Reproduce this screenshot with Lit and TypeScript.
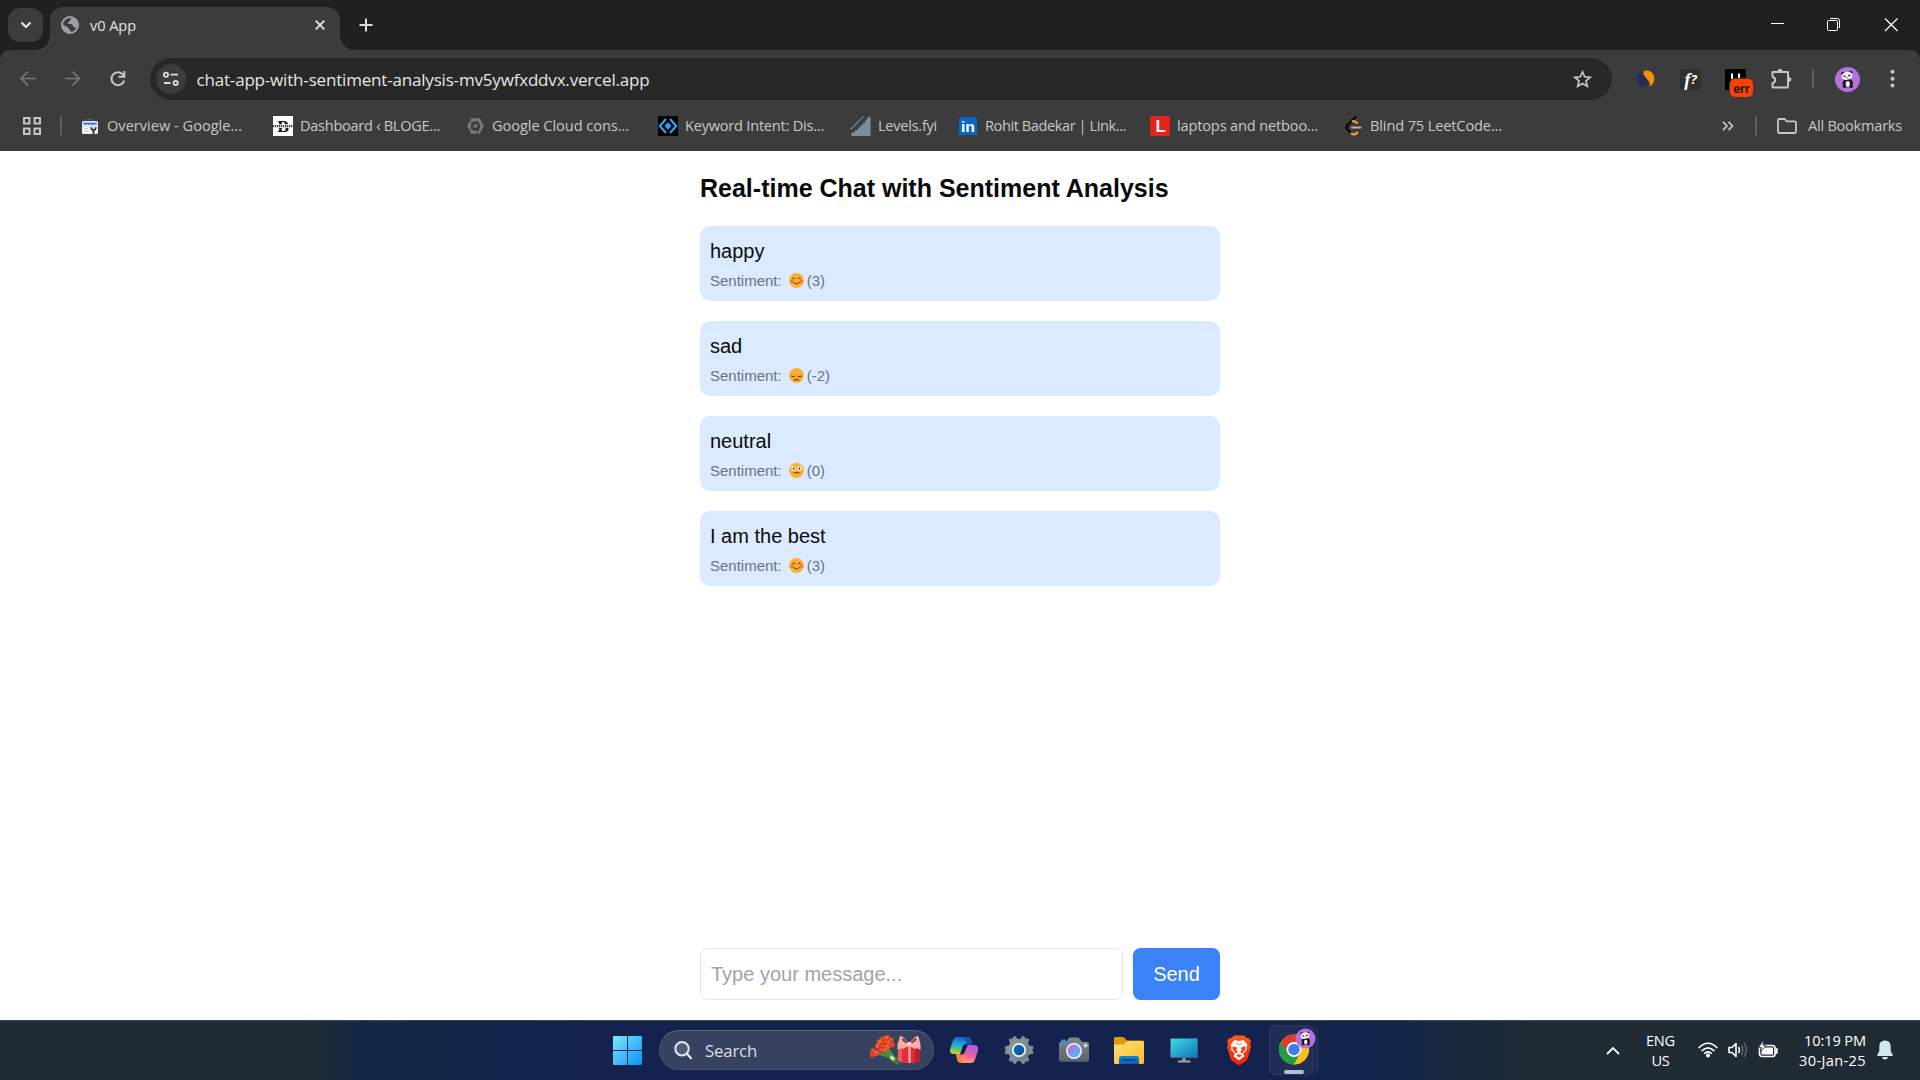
import { LitElement, html, css, svg, type TemplateResult } from "lit";
import { customElement, property } from "lit/decorators.js";

/** A single-line label whose tracking is adjusted so it occupies `w` pixels. */
@customElement("fit-label")
export class FitLabel extends LitElement {
  @property({ type: Number }) w = 0;
  @property() text = "";
  static styles = css`
    :host { display: block; white-space: pre; flex: none; }
    .t { display: inline-block; white-space: pre; }
  `;
  render() {
    return html`<span class="t">${this.text}</span>`;
  }
  updated() {
    const el = this.renderRoot.querySelector<HTMLElement>(".t");
    if (!el || !this.w) return;
    this.style.width = `${this.w}px`;
    el.style.letterSpacing = "0px";
    const natural = el.getBoundingClientRect().width;
    el.style.letterSpacing = `${(this.w - natural) / this.text.length}px`;
  }
}

const icon = (w: number, h: number, body: TemplateResult, cls = "", vb = `0 0 ${w} ${h}`) =>
  html`<svg class="ic ${cls}" width=${w} height=${h} viewBox=${vb} fill="none">${body}</svg>`;

/* ---------- emoji ---------- */
type Mood = "happy" | "sad" | "neutral";

const faces: Record<Mood, TemplateResult> = {
  happy: svg`<circle cx="2.7" cy="8.3" r="1.5" fill="#ff6b3d"/><circle cx="12.3" cy="8.3" r="1.5" fill="#ff6b3d"/>
    <path d="M3.4 5.600Q4.700 3.800 6 5.600M9 5.600Q10.300 3.800 11.600 5.600M4.400 9.500Q7.500 12.600 10.600 9.500" stroke="#5b3626" stroke-width="1" stroke-linecap="round"/>`,
  sad: svg`<path d="M2.600 8Q4.200 9.200 5.800 8.200M9.200 8.200Q10.800 9.200 12.400 8M5.200 12.300Q7.500 10.400 9.800 12.300" stroke="#6b3f1d" stroke-width="1.100" stroke-linecap="round"/>`,
  neutral: svg`<circle cx="4.500" cy="5.400" r="2.200" fill="#fff"/><circle cx="10.500" cy="5.400" r="2.200" fill="#fff"/>
    <circle cx="4.700" cy="5.400" r="1" fill="#4a3426"/><circle cx="10.300" cy="5.400" r="1" fill="#4a3426"/>
    <path d="M4.800 9.800H10.200" stroke="#5b3626" stroke-width="1.100" stroke-linecap="round"/>`,
};
const face = (m: Mood) => icon(15, 15, svg`<circle cx="7.5" cy="7.5" r="7.4" fill="#fdb02f"/>${faces[m]}`);

/* ---------- panda avatar ---------- */
const panda = svg`
  <circle cx="12.5" cy="12.5" r="12.5" fill="#b470e0"/>
  <circle cx="7.800" cy="6.400" r="1.700" fill="#222"/><circle cx="15.700" cy="5.400" r="1.700" fill="#222"/>
  <ellipse cx="12.800" cy="16" rx="5.200" ry="4.400" fill="#161616"/>
  <ellipse cx="12" cy="8.900" rx="5.600" ry="4" fill="#f1f1f1" transform="rotate(-8 12 9)"/>
  <ellipse cx="12.800" cy="17" rx="2.200" ry="2.900" fill="#eee"/>
  <ellipse cx="9.600" cy="9.300" rx="1.300" ry=".8" fill="#222"/><ellipse cx="14.300" cy="8.600" rx="1.300" ry=".8" fill="#222"/>
  <circle cx="12.100" cy="10.800" r=".6" fill="#222"/>
  <ellipse cx="9.300" cy="19.600" rx="1.700" ry="1.300" fill="#111"/><ellipse cx="16.300" cy="19.600" rx="1.700" ry="1.300" fill="#111"/>`;

/* ---------- bookmarks ---------- */
interface Bookmark { label: string; w: number; gap: number; after: number; icon: TemplateResult; }

const bookmarks: Bookmark[] = [
  { label: "Overview - Google...", w: 135, gap: 9, after: 31,
    icon: icon(16, 16, svg`<path d="M4.500 3V2Q4.500 1.200 5.500 1.200H10.500Q11.500 1.200 11.500 2V3" stroke="#5a5a5a" stroke-width="1.200"/>
      <path d="M1.500 3H14.500Q16 3 16 4.500V14.500Q16 16 14.500 16H1.500Q0 16 0 14.500V4.500Q0 3 1.500 3Z" fill="#eef1f6"/>
      <rect x="1" y="4.600" width="14" height="2.200" rx="1" fill="#3f82f5"/>
      <path d="M0 8.200H16" stroke="#cfd6e2" stroke-width=".8"/><path d="M2.500 10.500H6M2.500 13H6" stroke="#c9c9c9"/>
      <path d="M9.300 9.300Q9.300 12 11.500 12.300Q13.700 12 13.700 9.300M11.500 12V16" stroke="#333" stroke-width="1.900"/>`) },
  { label: "Dashboard ‹ BLOGE...", w: 140, gap: 7, after: 27,
    icon: icon(20, 20, svg`<rect width="20" height="20" fill="#fff"/>
      <text x="10" y="16" text-anchor="middle" font-family="Liberation Serif, serif" font-weight="700" font-size="17.500" fill="#111">B</text>
      <rect y="8.300" width="20" height="3.600" fill="#fff"/>
      <path d="M0 10.200H20" stroke="#444" stroke-width="2.300" stroke-dasharray="1.300 .7"/>`) },
  { label: "Google Cloud cons...", w: 137, gap: 8, after: 29,
    icon: icon(17, 16, svg`<path d="M5.200 1.800H11.800L15.200 8L11.800 14.200H5.200L1.800 8Z" stroke="#7a7a7a" stroke-width="2.900"/>
      <circle cx="8.500" cy="8" r="2.300" fill="#6c6c6c"/><path d="M2.500 2L6 7M2 13L5.500 9.500M12.500 9L9.800 16" stroke="#3c3c3c" stroke-width=".9"/>`) },
  { label: "Keyword Intent: Dis...", w: 139, gap: 7, after: 26,
    icon: icon(20, 20, svg`<rect width="20" height="20" fill="#000"/>
      <path d="M8 3L1.800 10L8 17M12 3L18.200 10L12 17" stroke="#2aa5f7" stroke-width="2.200"/>
      <path d="M10 6.300L13.500 10L10 13.700L6.500 10Z" fill="#2aa5f7"/>`) },
  { label: "Levels.fyi", w: 59, gap: 7, after: 22,
    icon: icon(21, 20, svg`<path d="M20.500 1V20H1.500V16.500H5V14H8V11.500H10.500V9H13V6.500H15.500V3.500H17.500V1Z" fill="#7b8f9b"/>
      <path d="M.5 13.500L13.500 .5" stroke="#6e8494" stroke-width="1.300"/>`) },
  { label: "Rohit Badekar | Link...", w: 141, gap: 8, after: 24,
    icon: icon(18, 18, svg`<rect width="18" height="18" rx="1.500" fill="#0a66c2"/>
      <text x="9" y="14.800" text-anchor="middle" font-family="Liberation Sans, sans-serif" font-weight="700" font-size="15.500" textLength="14" lengthAdjust="spacingAndGlyphs" fill="#fff">in</text>`) },
  { label: "laptops and netboo...", w: 141, gap: 7, after: 27,
    icon: icon(20, 20, svg`<rect width="20" height="20" fill="#e2231a"/>
      <text x="10.700" y="15.800" text-anchor="middle" font-family="Liberation Sans, sans-serif" font-weight="700" font-size="17" fill="#fff">L</text>`) },
  { label: "Blind 75 LeetCode...", w: 132, gap: 8, after: 0,
    icon: icon(17, 20, svg`<path d="M10.500 1L2.300 9.300Q.8 11.300 2.300 13.300L5.500 16.500" stroke="#080808" stroke-width="2.400" stroke-linecap="round"/>
      <path d="M7 5.600Q9.500 4 12.500 7.500M6 17Q9.500 20.500 12.800 15.800" stroke="#ffa116" stroke-width="2.300"/>
      <path d="M7 11.500H15.500" stroke="#b3b3b3" stroke-width="2.200" stroke-linecap="round"/>`) },
];

const messages: { text: string; mood: Mood; score: number }[] = [
  { text: "happy", mood: "happy", score: 3 },
  { text: "sad", mood: "sad", score: -2 },
  { text: "neutral", mood: "neutral", score: 0 },
  { text: "I am the best", mood: "happy", score: 3 },
];

/* ---------- browser chrome ---------- */
@customElement("browser-frame")
export class BrowserFrame extends LitElement {
  static styles = css`
    :host { display: block; height: 151px; background: #1f2120; color: #e3e3e3;
      font-family: "Open Sans", "Noto Sans", sans-serif; font-size: 14.600px; }
    .ic { display: block; flex: none; overflow: visible; }
    .strip { display: flex; height: 50px; }
    .search-tabs { width: 35px; height: 34px; margin: 8px 7px 0 8px; border-radius: 12px; background: #3c3c3c;
      display: flex; align-items: center; justify-content: center; }
    .tab { position: relative; width: 290px; height: 43px; margin: 7px 1px 0 0; border-radius: 13px 13px 0 0;
      background: #3c3c3c; display: flex; align-items: center; padding: 0 15px 8px 11px; box-sizing: border-box; }
    .tab::before, .tab::after { content: ""; position: absolute; bottom: 0; width: 14px; height: 14px; }
    .tab::before { left: -14px; background: radial-gradient(circle at 0 0, transparent 13.5px, #3c3c3c 14px); }
    .tab::after { right: -14px; background: radial-gradient(circle at 100% 0, transparent 13.5px, #3c3c3c 14px); }
    .tab fit-label { margin-left: 11px; }
    .tab-close { margin-left: auto; }
    .newtab { margin: 18px 0 0 18px; }
    .win { margin-left: auto; display: flex; padding: 17px 21px 0 0; gap: 43px; }
    .body { height: 101px; background: #3c3c3c; border-radius: 10px 10px 0 0; }
    .tools { display: flex; height: 58px; align-items: center; padding-left: 20px; box-sizing: border-box; }
    .nav { display: flex; align-items: center; gap: 29px; width: 130px; }
    .url { width: 1462px; height: 42px; border-radius: 21px; background: #282828; display: flex; align-items: center;
      box-sizing: border-box; padding: 0 20px 0 6px; color: #e6e6e6; font-size: 17px; }
    .site { width: 30px; height: 30px; border-radius: 50%; background: #3c3c3c; display: flex; align-items: center; justify-content: center; margin-right: 10.500px; }
    .star { margin-left: auto; }
    .ext { display: flex; align-items: center; padding-left: 24px; }
    .fbox { width: 21px; height: 21px; margin-left: 25px; border-radius: 3px; background: #303030; color: #fff;
      display: flex; align-items: center; justify-content: center; font: italic bold 19px/19px "Liberation Serif", serif; }
    .fbox b { font: italic bold 13px/20px "Open Sans", sans-serif; }
    .blk { position: relative; width: 21px; height: 21px; margin-left: 24px; background: #000; }
    .badge { position: absolute; left: 5px; top: 10px; width: 23px; height: 18px; border-radius: 5px; background: #ff4000;
      color: #1a1a1a; font: bold 11.500px/20px "Open Sans", sans-serif; letter-spacing: -.3px; text-align: center; box-shadow: 0 0 0 1px #3c3c3c; }
    .puzzle { margin-left: 24px; }
    .dots { margin-left: 30px; }
    .sep { width: 2px; height: 20px; background: #5d5d5d; border-radius: 1px; }
    .ext .sep { margin: 0 21px 0 20px; }
    .marks { display: flex; align-items: center; height: 35px; padding: 0 18px 0 23px; box-sizing: border-box; color: #c7c7c7; }
    .marks fit-label { margin-bottom: 2px; }
    .mark { display: flex; align-items: center; }
    .first { margin: 0 20px 0 18px; }
    .right { margin-left: auto; display: flex; align-items: center; }
    .right .sep { margin: 0 20px 0 21px; }
    .right fit-label { margin-left: 11px; }
  `;
  render() {
    return html`
      <div class="strip">
        <div class="search-tabs">${icon(12, 8, svg`<path d="M1.500 1.500L6 6L10.500 1.500" stroke="#e3e3e3" stroke-width="2.200"/>`)}</div>
        <div class="tab">
          ${icon(18, 18, svg`<circle cx="9" cy="9" r="9" fill="#9aa0a6"/>
            <path d="M9.800 1.900Q10.500 4.200 8.500 4.600Q8.200 6.400 6.600 6.600Q6.500 8 8 8.100Q9.500 7.700 11 8.200Q12 9 12 10.300Q13.500 10.500 13.300 11.800Q14.800 12.200 15.700 10.200Q14.500 15.300 9.600 16Q9.800 14.300 8.300 13.600Q7 13 7.200 11.300Q4.500 11.300 2.600 9Q2 8.300 2 7.700Q3.500 2.200 9.800 1.900Z" fill="#3c3c3c"/>
            <path d="M2 9L7 11.400V13L9.500 14.200V16.200L4.500 15Z" fill="#9aa0a6"/>`)}
          <fit-label .w=${46} text="v0 App"></fit-label>
          ${icon(10, 10, svg`<path d="M.7 .7L9.300 9.300M9.300 .7L.7 9.300" stroke="#e3e3e3" stroke-width="1.900"/>`, "tab-close")}
        </div>
        <div class="newtab">${icon(14, 14, svg`<path d="M7 .5V13.500M.5 7H13.500" stroke="#dcdcdc" stroke-width="2"/>`)}</div>
        <div class="win">
          ${icon(13, 14, svg`<path d="M0 6.500H13" stroke="#fff"/>`)}
          ${icon(14, 14, svg`<path d="M3 1.500H10.500Q12.500 1.500 12.500 3.500V11" stroke="#fff"/><rect x=".5" y="3.500" width="10" height="10" rx="1" stroke="#fff"/>`)}
          ${icon(15, 15, svg`<path d="M1 1.500L13.500 14M13.500 1.500L1 14" stroke="#fff" stroke-width="1.200"/>`)}
        </div>
      </div>
      <div class="body">
        <div class="tools">
          <div class="nav">
            ${icon(16, 16, svg`<path d="M15.500 7.500H1.500M8 .7L1.200 7.500L8 14.300" stroke="#777" stroke-width="1.700"/>`)}
            ${icon(16, 16, svg`<path d="M0 7.500H14M7.500 .7L14.300 7.500L7.500 14.300" stroke="#777" stroke-width="1.700"/>`)}
            ${icon(17, 16, svg`<path d="M14.200 9.500A6.500 6.500 0 1 1 13 3.600L14.600 5.600" stroke="#c7c7c7" stroke-width="2"/><path d="M14.300 0V5.800H8.500" stroke="#c7c7c7" stroke-width="2"/>`)}
          </div>
          <div class="url">
            <div class="site">${icon(16, 14, svg`<g stroke="#dedede" stroke-width="1.800"><circle cx="3" cy="2.700" r="2.100"/><path d="M7.500 2.700H15M1 11H7.500"/><circle cx="12.700" cy="11" r="2.100"/></g>`)}</div>
            <fit-label .w=${453} text="chat-app-with-sentiment-analysis-mv5ywfxddvx.vercel.app"></fit-label>
            <div class="star">${icon(19, 18, svg`<path d="M9.500 1.800L11.700 6.800L17.200 7.300L13 10.900L14.300 16.300L9.500 13.400L4.700 16.300L6 10.900L1.800 7.300L7.300 6.800Z" stroke="#c7c7c7" stroke-width="1.700"/>`)}</div>
          </div>
          <div class="ext">
            ${icon(19, 18, svg`<path d="M4.800 1.800C5.500 6 12.500 7.500 12 13C11.700 16.500 8 18 5.500 16.800C-1 13.500 -1 5 4.800 1.800Z" fill="#232c5c"/>
              <path d="M7.500 1.800C10.500 -1 18.500 1 18.300 9C18.200 12.500 16.500 15 13.500 16.500C16 10.500 7 8.500 7.500 1.800Z" fill="#f88f06"/>`)}
            <div class="fbox">f<b>?</b></div>
            <div class="blk">
              ${icon(21, 21, svg`<path d="M7 4.500V10M14 4.500V10" stroke="#fff" stroke-width="2"/>`)}
              <div class="badge">err</div>
            </div>
            ${icon(22, 22, svg`<path d="M2.500 4H18V18.500Q18 19.500 17 19.500H3.500Q2.500 19.500 2.500 18.500V15.200Q5.200 14.500 5.200 12Q5.200 9.500 2.500 8.700Z" stroke="#c7c7c7" stroke-width="2" stroke-linejoin="round"/>
              <path d="M7.300 3.500Q7.800 .8 10 .8T12.700 3.500ZM18.500 8.800Q21.500 9.500 21.500 11.500T18.500 14.200Z" fill="#c7c7c7"/>`, "puzzle")}
            <div class="sep"></div>
            ${icon(25, 25, panda)}
            ${icon(5, 20, svg`<g fill="#c7c7c7"><circle cx="2.500" cy="2.700" r="2"/><circle cx="2.500" cy="9.700" r="2"/><circle cx="2.500" cy="16.500" r="2"/></g>`, "dots")}
          </div>
        </div>
        <div class="marks">
          ${icon(19, 18, svg`<g stroke="#c7c7c7" stroke-width="2"><rect x="1" y="1" width="5.500" height="5.500"/><rect x="11.500" y="1" width="5.500" height="5.500"/><rect x="1" y="11.500" width="5.500" height="5.500"/><rect x="11.500" y="11.500" width="5.500" height="5.500"/></g>`)}
          <div class="sep first"></div>
          ${bookmarks.map((b) => html`<div class="mark" style="gap:${b.gap}px;margin-right:${b.after}px">
            ${b.icon}<fit-label .w=${b.w} text=${b.label}></fit-label></div>`)}
          <div class="right">
            ${icon(12, 10, svg`<path d="M1 .8L5 5L1 9.200M6.500 .8L10.500 5L6.500 9.200" stroke="#c7c7c7" stroke-width="1.700"/>`)}
            <div class="sep"></div>
            ${icon(20, 16, svg`<path d="M1 13.500V2.500Q1 1 2.500 1H7.500L9.700 3.300H17.500Q19 3.300 19 4.800V13.500Q19 15 17.500 15H2.500Q1 15 1 13.500Z" stroke="#c7c7c7" stroke-width="1.800"/>`)}
            <fit-label .w=${94} text="All Bookmarks"></fit-label>
          </div>
        </div>
      </div>`;
  }
}

/* ---------- chat page ---------- */
@customElement("chat-page")
export class ChatPage extends LitElement {
  static styles = css`
    :host { display: flex; flex-direction: column; flex: 1; width: 520px; margin: 0 auto; padding: 20px 0; box-sizing: border-box;
      font-family: "Liberation Sans", Arial, sans-serif; color: #0a0a0a; }
    h1 { margin: 0 0 20px; font-size: 25px; line-height: 35px; font-weight: 700; }
    .list { flex: 1; display: flex; flex-direction: column; gap: 20px; }
    .msg { height: 75px; box-sizing: border-box; padding: 10px; border-radius: 10px; background: #dbeafe; }
    .text { font-size: 20px; line-height: 30px; margin-bottom: 5px; }
    .meta { display: flex; font-size: 15px; line-height: 20px; color: #6b7280; }
    .ic { display: block; margin: 2px 3px 0 7px; }
    form { display: flex; gap: 10px; height: 52px; margin: 0; }
    input { flex: 1; min-width: 0; box-sizing: border-box; border: 1px solid #e5e5e5; border-radius: 7.500px; padding: 0 10px;
      font: 20px "Liberation Sans", Arial, sans-serif; background: #fff; outline: none; }
    input::placeholder { color: #9ca3af; opacity: 1; }
    button { width: 87px; border: 0; border-radius: 7.500px; padding: 0; background: #3b82f6; color: #fff; font: 20px "Liberation Sans", Arial, sans-serif; }
  `;
  render() {
    return html`
      <h1>Real-time Chat with Sentiment Analysis</h1>
      <div class="list">
        ${messages.map((m) => html`<div class="msg">
          <div class="text">${m.text}</div>
          <div class="meta"><span>Sentiment:</span>${face(m.mood)}<span>(${m.score})</span></div>
        </div>`)}
      </div>
      <form @submit=${(e: Event) => e.preventDefault()}>
        <input placeholder="Type your message..." /><button>Send</button>
      </form>`;
  }
}

/* ---------- taskbar ---------- */
const lin = (id: string, a: string, b: string, diag = true) =>
  svg`<linearGradient id=${id} x1="0" y1="0" x2=${diag ? 1 : 0} y2="1"><stop stop-color=${a}/><stop offset="1" stop-color=${b}/></linearGradient>`;

const blooms = [[13, 4], [17, 3], [21, 5], [10, 7], [15, 7], [19, 8], [22, 10], [8, 11], [12, 11], [17, 12], [11, 15], [15, 15], [3, 16], [6, 18], [2, 20]];

const bouquet = icon(51, 30, svg`
  <path d="M13 14L27 28M18 14L26 26M8 18L20 22" stroke="#3b9a3b" stroke-width="2.600"/>
  <path d="M20 21L28 24M19 23L29 29" stroke="#2f8a30" stroke-width="2.200"/>
  ${blooms.map(([x, y], i) => svg`<circle cx=${x} cy=${y} r="3" fill=${i % 2 ? "#e2512a" : "#c93a1c"}/><path d="M${x - 1.5} ${y}Q${x} ${y - 2} ${x + 1.5} ${y}" stroke="#f5835a" stroke-width=".9"/>`)}
  <path d="M21 20L25 23L23 26L20 23Z" fill="#f0dfae"/>
  <path d="M28 9H50V26L45 28H33L28 26Z" fill="#d9303c"/>
  <path d="M28 9H32V27.500L28 26Z" fill="#ee5a5c"/><path d="M45 9H50V26L45 28Z" fill="#b91f30"/>
  <path d="M38 10H41V28H38Z" fill="#f08c88"/>
  <path d="M39 9Q30 -3 29.500 3Q29 6 27.500 9V15Q31 12 33 14Q36 12 39 11ZM39 9Q48 -3 49 3Q49.500 6 50.500 9V15Q47 12 45 14Q42 12 39 11Z" fill="#f5b0a5"/>
  <path d="M37.500 7.500Q33 2 31.500 3.500Q32 7 37.500 8.500ZM41 7.500Q45 2 46.700 3.500Q46 7 41 8.500Z" fill="#8e3a4a"/>
  <circle cx="39.300" cy="9" r="2.300" fill="#fbc7bb"/>`);

const copilot = icon(28, 26, svg`<defs>
    <linearGradient id="cpa" x1=".5" y1="0" x2=".3" y2="1"><stop stop-color="#2458c9"/><stop offset=".4" stop-color="#18a5e8"/><stop offset=".72" stop-color="#55c879"/><stop offset="1" stop-color="#e8c832"/></linearGradient>
    <linearGradient id="cpb" x1=".6" y1="0" x2=".3" y2="1"><stop stop-color="#a95df0"/><stop offset=".5" stop-color="#ef5f9d"/><stop offset="1" stop-color="#ffa560"/></linearGradient></defs>
  <path d="M7 0H17.500Q20 0 21 3L22.300 7H17Q14 7 13 10L10.500 17H4Q-1.500 17 .5 11L3 3.500Q4 0 7 0Z" fill="url(#cpa)"/>
  <path d="M21 26H11Q8.300 26 7.300 23L6 17H11Q14 17 15 14L17.300 8H24Q29.500 8 27.500 15L25 22.500Q24 26 21 26Z" fill="url(#cpb)"/>
  <path d="M14.500 0H17.500Q20 0 21 3L22.300 7.500H17Z" fill="#1d4fb5"/>
  <path d="M13 26H11Q8.300 26 7.300 23L6 17.500H10Z" fill="#f5843c"/>
  <path d="M13 8.500Q14 7 16.800 7H18L14.800 15Q14 17.500 11 17.500H10Z" fill="#13224c"/>`);

const teeth = [0, 60, 120, 180, 240, 300];
const gear = icon(30, 30, svg`<defs>${lin("gr", "#929ca3", "#707a82")}${lin("gb", "#1373c4", "#0b4b94")}</defs>
  ${teeth.map((a) => svg`<path d="M10.300 6L11.300 .8H14L15 2.200L16 .8H18.700L19.700 6V9H10.300Z" fill="#838d95" transform="rotate(${a + 30} 15 15)"/>`)}
  <circle cx="15" cy="15" r="11" fill="url(#gr)"/><circle cx="15" cy="15" r="7.100" fill="#eef4f8"/><circle cx="15" cy="15" r="5.300" fill="url(#gb)"/>`);

const camera = icon(30, 26, svg`<defs>${lin("ca", "#7e8990", "#59636b", false)}${lin("cl", "#c264e8", "#45c5f4")}</defs>
  <rect x="2" y="2.500" width="5" height="4" rx="1" fill="#2196e8"/>
  <path d="M0 6.500Q0 5 1.500 5H7L9.500 1.500Q10.200 .5 11.500 .5H18.500Q19.800 .5 20.500 1.500L23 5H28.500Q30 5 30 6.500V23Q30 24.800 28.500 24.800H1.500Q0 24.800 0 23Z" fill="url(#ca)"/>
  <circle cx="15" cy="14" r="8" fill="#f3f3f6"/><circle cx="15" cy="14" r="6.400" fill="url(#cl)"/>
  <path d="M26.500 6.500V10.500M24.500 8.500H28.500" stroke="#e6f0f8" stroke-width="1.300"/>`);

const folder = icon(30, 27, svg`<defs>${lin("fo", "#ffdf70", "#fbbd2f")}${lin("fb", "#1583d6", "#0b62ad", false)}</defs>
  <path d="M0 1.500Q0 0 1.500 0H9.500L13 3.500H28.500Q30 3.500 30 5V12H0Z" fill="#dd9a0d"/>
  <path d="M0 7.500H10L13 4H28.500Q30 4 30 5.500V25.500Q30 27 28.500 27H1.500Q0 27 0 25.500Z" fill="url(#fo)"/>
  <path d="M5 27V21.500Q5 19 7.500 19H22.500Q25 19 25 21.500V27Z" fill="url(#fb)"/><path d="M9 23H21" stroke="#0a4379" stroke-width="1.300" stroke-linecap="round"/>`);

const monitor = icon(28, 25, svg`<defs>${lin("mo", "#40dbe1", "#0c76be")}</defs>
  <rect width="28" height="20" rx="1.200" fill="#356a8c"/><rect x="1" y="1" width="26" height="18" fill="url(#mo)"/>
  <path d="M12 20H16V23H12Z" fill="#7d8b96"/><rect x="8" y="22.500" width="12.500" height="2" rx=".6" fill="#9ba8b1"/>`);

const brave = icon(26, 31, svg`<defs>${lin("br", "#ff5c18", "#f21c0c", false)}</defs>
  <path d="M8 .5H18L20.500 3H22.500L25 6L24 9L25 12L21.500 23.500Q20.500 25.500 18.500 27L13 30.500L7.500 27Q5.500 25.500 4.500 23.500L1 12L2 9L1 6L3.500 3H5.500Z" fill="url(#br)"/>
  <path d="M13 6L17.500 5L21.500 10L20.500 12.500L21 14.500L17 19L18.500 21L13 25.500L7.500 21L9 19L5 14.500L5.500 12.500L4.500 10L8.500 5Z" fill="#fff"/>
  <path d="M6.500 11.300L11 12.600L10.500 15.500L12 17.200L9.800 18.500L6.500 14.200ZM19.500 11.300L15 12.600L15.500 15.500L14 17.200L16.200 18.500L19.500 14.200ZM9.500 8L13 9L16.500 8L14.500 9.500H11.500ZM10 20.500L13 19L16 20.500L13 22.600Z" fill="#fb4015"/>`);

const chrome = icon(42, 38, svg`
  <g transform="translate(15 22.500)">
    <circle r="15" fill="#fbc116"/>
    <path d="M-13 -7.500A15 15 0 0 1 13 -7.500H0L-6.500 3.700Z" fill="#e23b2e"/>
    <path d="M-13 -7.500A15 15 0 0 0 0 15L6.500 3.800L-6.500 3.800Z" fill="#229a48"/>
    <path d="M0 15L6.800 3.500L4 -7.500H13A15 15 0 0 1 0 15Z" fill="#fbc116"/>
    <circle r="7.500" fill="#fff"/><circle r="5.800" fill="#3a7df0"/>
  </g>
  <g transform="translate(16.500 1.500) scale(.8)">${panda}</g>`);

@customElement("task-bar")
export class TaskBar extends LitElement {
  static styles = css`
    :host { display: flex; align-items: center; height: 60px; box-sizing: border-box; border-top: 1px solid #3a4a55;
      padding: 0 27px 1px 613px; color: #fff; font-family: "Open Sans", "Noto Sans", sans-serif; font-size: 14.600px;
      background: linear-gradient(90deg, #1f2a33 0, #1f2b35 310px, #142846 360px, #13264a 480px, #14224f 650px, #14224e 1250px, #13274a 1400px, #1b2a38 1490px, #202b34 1560px, #1f2a34 100%); }
    .ic { display: block; flex: none; }
    .search { width: 275px; height: 40px; margin: 0 15px 0 17px; box-sizing: border-box; border-radius: 20px; background: #36425f;
      border: 1px solid #46516d; border-top-color: #5d6680; display: flex; align-items: center; padding: 0 12px 0 14px; color: #dcdfe6; font-size: 16.800px; }
    .search fit-label { margin-left: 13px; }
    .gift { margin-left: auto; }
    .apps { display: flex; align-items: center; }
    .slot { width: 55px; display: flex; justify-content: center; }
    .slot:first-child { width: 30px; margin-right: 12px; }
    .tile { position: relative; width: 44px; height: 50px; box-sizing: border-box; border: 1px solid #2c395f; border-radius: 6px; background: #202d56; margin-left: 3px; box-shadow: 5px 0 0 -1px #1c2951, 6px 0 0 -1px #2c395f; }
    .tile .ic { position: absolute; left: 9px; top: 1px; }
    .run { position: absolute; left: 14px; bottom: 0; width: 20px; height: 4px; border-radius: 2px; background: #b0c4ce; }
    .tray { margin-left: auto; display: flex; align-items: center; }
    .two { display: flex; flex-direction: column; line-height: 20px; padding-bottom: 1px; }
    .lang { align-items: center; margin: 0 23px 0 26px; }
    .clock { align-items: flex-end; margin: 0 11px 0 21px; }
    .gap { margin-left: 10px; }
  `;
  render() {
    return html`
      ${icon(29, 29, svg`<defs><linearGradient id="wn" gradientUnits="userSpaceOnUse" x1="0" y1="0" x2="29" y2="29"><stop stop-color="#7deafe"/><stop offset="1" stop-color="#0a90f5"/></linearGradient></defs>
        <path d="M0 1Q0 0 1 0H14V14H0ZM15 0H28Q29 0 29 1V14H15ZM0 15H14V29H1Q0 29 0 28ZM15 15H29V28Q29 29 28 29H15Z" fill="url(#wn)"/>`)}
      <div class="search">
        ${icon(18, 19, svg`<circle cx="8" cy="7.700" r="6.700" stroke="#e4e7ee" stroke-width="2" fill="#515c78"/><path d="M13 12.800L17 17.200" stroke="#e4e7ee" stroke-width="2.300" stroke-linecap="round"/>`)}
        <fit-label .w=${52} text="Search"></fit-label>
        <div class="gift">${bouquet}</div>
      </div>
      <div class="apps">
        ${[copilot, gear, camera, folder, monitor, brave].map((a) => html`<div class="slot">${a}</div>`)}
        <div class="tile">${chrome}<div class="run"></div></div>
      </div>
      <div class="tray">
        ${icon(14, 9, svg`<path d="M1 8L7 2L13 8" stroke="#fff" stroke-width="1.800"/>`)}
        <div class="two lang"><fit-label .w=${29} text="ENG"></fit-label><fit-label .w=${18} text="US"></fit-label></div>
        ${icon(20, 16, svg`<g stroke="#fff" stroke-width="1.700"><path d="M.7 6Q10 -3.500 19.300 6"/><path d="M3.500 9Q10 2.500 16.500 9"/><path d="M6.200 11.700Q10 8 13.800 11.700"/></g><circle cx="10" cy="13.500" r="2" fill="#fff"/>`)}
        ${icon(20, 16, svg`<path d="M1 5.500H4L8 1.500V14.500L4 10.500H1Z" stroke="#fff" stroke-width="1.600" stroke-linejoin="round"/><path d="M10.500 5Q12.500 8 10.500 11" stroke="#fff" stroke-width="1.500"/><path d="M13.200 3Q16.500 8 13.200 13M16 1Q20.700 8 16 15" stroke="#5d6770" stroke-width="1.400"/>`, "gap")}
        ${icon(20, 18, svg`<rect x="1.500" y="4.500" width="15.500" height="11" rx="2.500" stroke="#fff" stroke-width="1.700"/><path d="M6 6.500H15V13.500H3.500V10.500Z" fill="#fff"/><path d="M18.800 8V12" stroke="#fff" stroke-width="1.800" stroke-linecap="round"/><path d="M5.300 -.8L.8 6.500H3.500L2 11L8 4.500H5Z" fill="#fff" stroke="#1f2a34" stroke-width=".7"/>`, "gap")}
        <div class="two clock"><fit-label .w=${62} text="10:19 PM"></fit-label><fit-label .w=${67} text="30-Jan-25"></fit-label></div>
        ${icon(16, 20, svg`<path d="M8 .5Q13.700 .5 13.700 6.500V11L15.800 15Q16 16 15 16H1Q0 16 .2 15L2.300 11V6.500Q2.300 .5 8 .5Z" fill="#d3e8ea"/><path d="M5 17H11Q10.500 19.500 8 19.500T5 17Z" fill="#d3e8ea"/>`)}
      </div>`;
  }
}

@customElement("app-root")
export class AppRoot extends LitElement {
  static styles = css`
    :host { display: flex; flex-direction: column; width: 1920px; height: 1080px; background: #fff; overflow: hidden; }
  `;
  render() {
    return html`<browser-frame></browser-frame><chat-page></chat-page><task-bar></task-bar>`;
  }
}
